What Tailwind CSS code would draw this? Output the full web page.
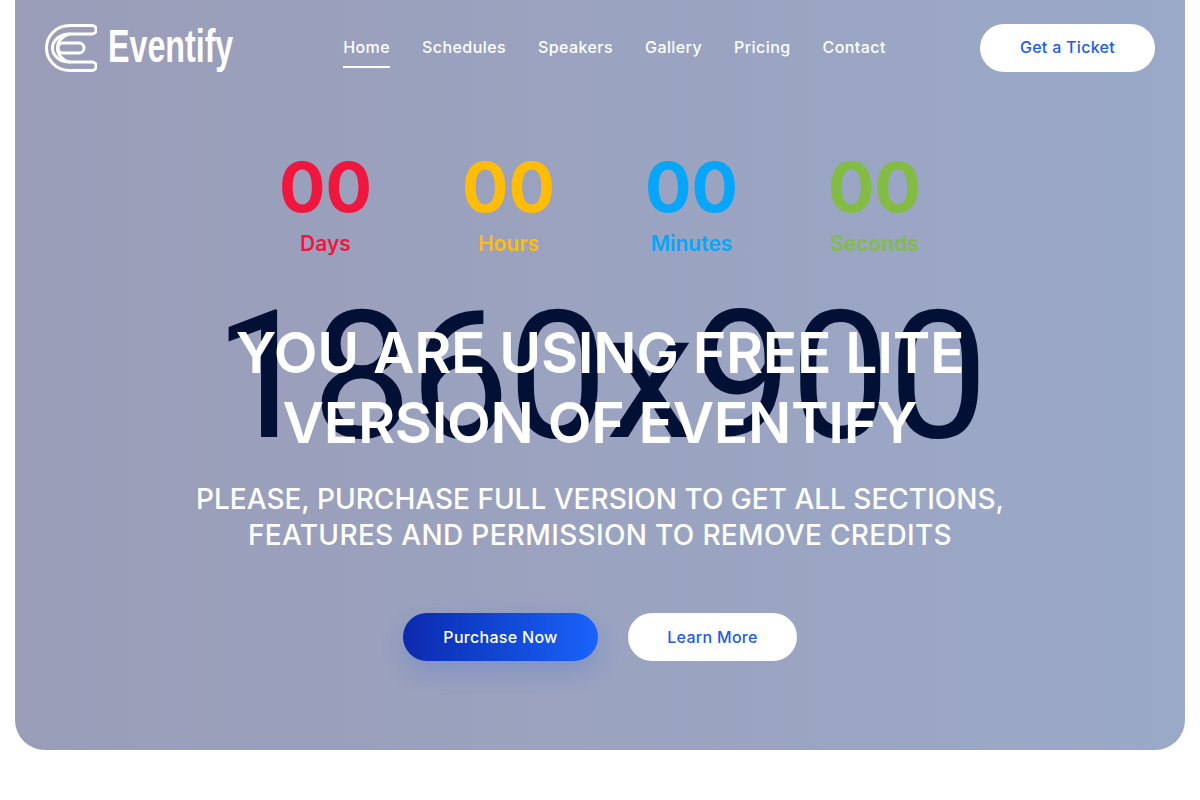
<!DOCTYPE html>
<html lang="en">
<head>
  <meta charset="UTF-8" />
  <title>Eventify</title>
  <script src="https://cdn.jsdelivr.net/npm/@tailwindcss/browser@4"></script>
</head>
<body class="bg-white font-['Inter','Noto_Sans',sans-serif] overflow-hidden">

  <div class="mx-[15px] h-[750px] rounded-b-[30px] bg-gradient-to-r from-[#9a9db8] to-[#9aa9c8] relative overflow-hidden">

    <!-- placeholder text of the hero image -->
    <div class="absolute left-0 right-0 top-[281px] text-center font-['Roboto',sans-serif] text-[178px] leading-[190px] tracking-[-2px] text-[#031035] font-normal whitespace-nowrap">1860x900</div>

    <header class="relative flex items-center justify-between h-[95px] px-[30px]">
      <a href="#" class="flex items-center gap-[11px] w-[204px]">
        <svg class="shrink-0" width="52" height="48" viewBox="0 0 52 48" fill="none" stroke="white" stroke-width="3" stroke-linecap="round">
          <path d="M25 1.500H47a4 4 0 0 1 0 8.500H25C15 10 7.500 16 7.500 24S15 38 25 38H47a4 4 0 0 1 0 8.500H25C11 46.500 1.500 36 1.500 24S11 1.500 25 1.500z"/>
          <path d="M24 10C17 12 12.500 17.500 12.500 24S17 36 24 38"/>
          <rect x="13" y="19" width="26" height="10" rx="5"/>
        </svg>
        <span class="inline-block shrink-0 origin-left scale-x-[0.7] -mt-[4px] font-['Liberation_Sans',sans-serif] font-bold text-[46px] leading-none text-white">Eventify</span>
      </a>
      <nav class="flex items-center gap-8 text-[16px] tracking-[0.42px] font-medium text-white">
        <a href="#" class="block py-[7px] border-b-2 border-white">Home</a>
        <a href="#" class="block py-[7px] border-b-2 border-transparent">Schedules</a>
        <a href="#" class="block py-[7px] border-b-2 border-transparent">Speakers</a>
        <a href="#" class="block py-[7px] border-b-2 border-transparent">Gallery</a>
        <a href="#" class="block py-[7px] border-b-2 border-transparent">Pricing</a>
        <a href="#" class="block py-[7px] border-b-2 border-transparent">Contact</a>
      </nav>
      <a href="#" class="flex items-center justify-center w-[175px] h-[48px] pb-px rounded-full bg-white text-[#1d5ce8] text-[16px] tracking-[0.3px] font-medium">Get a Ticket</a>
    </header>

    <div class="relative flex justify-center gap-[93px] mt-[52px]">
      <div class="w-[90px] flex flex-col items-center text-[#f0173f]">
        <span class="text-[69px] leading-[80px] font-bold">00</span>
        <span class="text-[21px] leading-[34px] font-semibold">Days</span>
      </div>
      <div class="w-[90px] flex flex-col items-center text-[#ffbc08]">
        <span class="text-[69px] leading-[80px] font-bold">00</span>
        <span class="text-[21px] leading-[34px] font-semibold">Hours</span>
      </div>
      <div class="w-[90px] flex flex-col items-center text-[#07a6fa]">
        <span class="text-[69px] leading-[80px] font-bold">00</span>
        <span class="text-[21px] leading-[34px] font-semibold">Minutes</span>
      </div>
      <div class="w-[90px] flex flex-col items-center text-[#82bc43]">
        <span class="text-[69px] leading-[80px] font-bold">00</span>
        <span class="text-[21px] leading-[34px] font-semibold">Seconds</span>
      </div>
    </div>

    <div class="relative mt-[57px] text-center text-white">
      <h1 class="text-[57px] leading-[70px] tracking-[-0.3px] font-semibold">YOU ARE USING FREE LITE<br>VERSION OF EVENTIFY</h1>
      <p class="mt-[23px] text-[28px] leading-[36px] font-medium">PLEASE, PURCHASE FULL VERSION TO GET ALL SECTIONS,<br><span class="tracking-[0.33px]">FEATURES AND PERMISSION TO REMOVE CREDITS</span></p>
    </div>

    <div class="relative flex justify-center gap-[30px] mt-[60px]">
      <a href="#" class="flex items-center justify-center w-[195px] h-[48px] pb-px rounded-full bg-gradient-to-r from-[#0c29ae] to-[#1a63fb] text-white text-[16px] tracking-[0.3px] font-medium shadow-[0_10px_25px_rgba(26,80,230,0.2)]">Purchase Now</a>
      <a href="#" class="flex items-center justify-center w-[169px] h-[48px] pb-px rounded-full bg-white text-[#1d5ce8] text-[16px] tracking-[0.3px] font-medium">Learn More</a>
    </div>
  </div>

</body>
</html>
